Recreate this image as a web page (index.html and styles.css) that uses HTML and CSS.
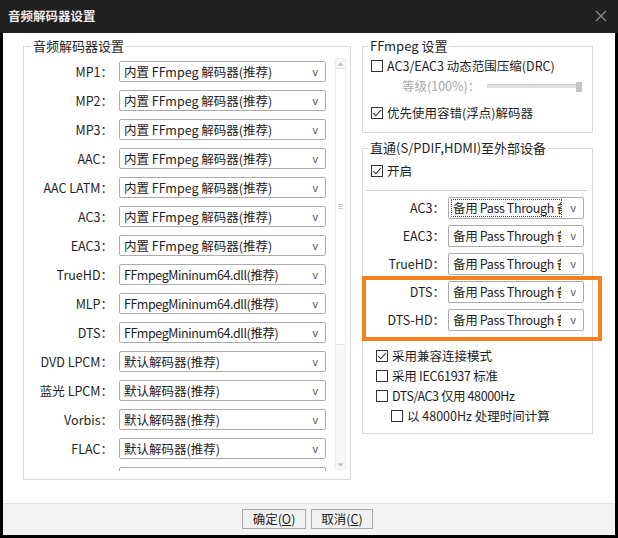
FILE: index.html
```html
<!DOCTYPE html>
<html lang="zh-CN">
<head>
<meta charset="utf-8">
<title>音频解码器设置</title>
<link rel="stylesheet" href="styles.css">
</head>
<body>
<div class="window">
  <div class="titlebar">
    <span class="title">音频解码器设置</span>
    <svg class="close" width="12" height="12" viewBox="0 0 12 12"><path d="M1 1L11 11M11 1L1 11" stroke="#8a8a8a" stroke-width="1.3" fill="none"/></svg>
  </div>
  <div class="body">
    <div class="main">
      <fieldset class="group left-group">
        <legend>音频解码器设置</legend>
        <div class="scroller">
          <div class="list">
            <div class="row"><span class="label">MP1：</span><div class="select"><span class="stext">内置 FFmpeg 解码器(推荐)</span><span class="arrow">v</span></div></div>
            <div class="row"><span class="label">MP2：</span><div class="select"><span class="stext">内置 FFmpeg 解码器(推荐)</span><span class="arrow">v</span></div></div>
            <div class="row"><span class="label">MP3：</span><div class="select"><span class="stext">内置 FFmpeg 解码器(推荐)</span><span class="arrow">v</span></div></div>
            <div class="row"><span class="label">AAC：</span><div class="select"><span class="stext">内置 FFmpeg 解码器(推荐)</span><span class="arrow">v</span></div></div>
            <div class="row"><span class="label">AAC LATM：</span><div class="select"><span class="stext">内置 FFmpeg 解码器(推荐)</span><span class="arrow">v</span></div></div>
            <div class="row"><span class="label">AC3：</span><div class="select"><span class="stext">内置 FFmpeg 解码器(推荐)</span><span class="arrow">v</span></div></div>
            <div class="row"><span class="label">EAC3：</span><div class="select"><span class="stext">内置 FFmpeg 解码器(推荐)</span><span class="arrow">v</span></div></div>
            <div class="row"><span class="label">TrueHD：</span><div class="select"><span class="stext tight">FFmpegMininum64.dll(推荐)</span><span class="arrow">v</span></div></div>
            <div class="row"><span class="label">MLP：</span><div class="select"><span class="stext tight">FFmpegMininum64.dll(推荐)</span><span class="arrow">v</span></div></div>
            <div class="row"><span class="label">DTS：</span><div class="select"><span class="stext tight">FFmpegMininum64.dll(推荐)</span><span class="arrow">v</span></div></div>
            <div class="row"><span class="label">DVD LPCM：</span><div class="select"><span class="stext">默认解码器(推荐)</span><span class="arrow">v</span></div></div>
            <div class="row"><span class="label">蓝光 LPCM：</span><div class="select"><span class="stext">默认解码器(推荐)</span><span class="arrow">v</span></div></div>
            <div class="row"><span class="label">Vorbis：</span><div class="select"><span class="stext">默认解码器(推荐)</span><span class="arrow">v</span></div></div>
            <div class="row"><span class="label">FLAC：</span><div class="select"><span class="stext">默认解码器(推荐)</span><span class="arrow">v</span></div></div>
            <div class="row"><span class="label"></span><div class="select"></div></div>
          </div>
          <div class="scrollbar">
            <div class="sb-btn"><svg width="9" height="6" viewBox="0 0 9 6"><path d="M1.5 4.5L4.5 1.5L7.5 4.5Z" fill="#b8b8b8"/></svg></div>
            <div class="sb-thumb"><span class="grip"></span></div>
            <div class="sb-track"></div>
            <div class="sb-btn"><svg width="9" height="6" viewBox="0 0 9 6"><path d="M1.5 1.5L4.5 4.5L7.5 1.5Z" fill="#b8b8b8"/></svg></div>
          </div>
        </div>
      </fieldset>
      <div class="right-col">
        <fieldset class="group ff-group">
          <legend>FFmpeg 设置</legend>
          <div class="check-row first">
            <span class="box"></span><span>AC3/EAC3 动态范围压缩(DRC)</span>
          </div>
          <div class="level-row">
            <span class="level-label">等级(100%)：</span>
            <div class="slider"><span class="slider-thumb"></span></div>
          </div>
          <div class="check-row third">
            <span class="box"><svg width="10" height="10" viewBox="0 0 10 10"><path d="M1.2 5.2L3.8 7.8L8.8 2.2" stroke="#333" stroke-width="1.1" fill="none"/></svg></span><span>优先使用容错(浮点)解码器</span>
          </div>
        </fieldset>
        <fieldset class="group pt-group">
          <legend>直通(S/PDIF,HDMI)至外部设备</legend>
          <div class="check-row enable">
            <span class="box"><svg width="10" height="10" viewBox="0 0 10 10"><path d="M1.2 5.2L3.8 7.8L8.8 2.2" stroke="#333" stroke-width="1.1" fill="none"/></svg></span><span>开启</span>
          </div>
          <div class="separator"></div>
          <div class="pt-rows">
            <div class="pt-row"><span class="pt-label">AC3：</span><div class="pselect"><span class="ptext focus">备用 Pass Through 备</span><span class="arrow">v</span></div></div>
            <div class="pt-row"><span class="pt-label">EAC3：</span><div class="pselect"><span class="ptext">备用 Pass Through 备</span><span class="arrow">v</span></div></div>
            <div class="pt-row"><span class="pt-label">TrueHD：</span><div class="pselect"><span class="ptext">备用 Pass Through 备</span><span class="arrow">v</span></div></div>
            <div class="pt-row"><span class="pt-label">DTS：</span><div class="pselect"><span class="ptext">备用 Pass Through 备</span><span class="arrow">v</span></div></div>
            <div class="pt-row"><span class="pt-label">DTS-HD：</span><div class="pselect"><span class="ptext">备用 Pass Through 备</span><span class="arrow">v</span></div></div>
          </div>
          <div class="opts">
            <div class="check-row opt"><span class="box"><svg width="10" height="10" viewBox="0 0 10 10"><path d="M1.2 5.2L3.8 7.8L8.8 2.2" stroke="#333" stroke-width="1.1" fill="none"/></svg></span><span>采用兼容连接模式</span></div>
            <div class="check-row opt"><span class="box"></span><span class="tight-s">采用 IEC61937 标准</span></div>
            <div class="check-row opt"><span class="box"></span><span class="tight">DTS/AC3 仅用 48000Hz</span></div>
            <div class="check-row opt indent"><span class="box"></span><span>以 48000Hz 处理时间计算</span></div>
          </div>
        </fieldset>
      </div>
    </div>
    <div class="footer">
      <button class="btn ok">确定(<u>O</u>)</button>
      <button class="btn cancel">取消(<u>C</u>)</button>
    </div>
  </div>
  <div class="highlight"></div>
</div>
</body>
</html>
```

FILE: styles.css
```css
* { box-sizing: border-box; }
html, body { margin: 0; padding: 0; }
body {
  background: #000;
  font-family: "Noto Sans CJK SC", "Noto Sans", sans-serif;
  font-size: 12.5px;
  color: #1e1e1e;
}
.window {
  position: relative;
  width: 618px;
  height: 538px;
  background: #000;
}
.titlebar {
  height: 33px;
  background: #202020;
  display: flex;
  align-items: center;
  justify-content: space-between;
  padding: 0 11px 0 8px;
}
.title {
  color: #ececec;
  font-size: 12.5px;
  font-weight: bold;
  line-height: 16px;
  margin-top: -1px;
}
.close { display: block; margin-top: -1px; }
.body {
  margin: 0 3px;
  height: 502px;
  background: #fff;
  display: flex;
  flex-direction: column;
}
.main {
  height: 470px;
  display: flex;
  padding: 4px 0 0 20px;
  gap: 11px;
}
.group {
  margin: 0;
  padding: 0;
  min-width: 0;
  border: 1px solid #d9d9d9;
}
.group legend {
  font-size: 13px;
  line-height: 18px;
  padding: 0 2px;
  color: #1e1e1e;
}
.left-group {
  width: 328px;
  height: 443px;
}
.left-group legend { margin-left: 7px; }
.scroller {
  display: flex;
  align-items: flex-start;
  padding-top: 2px;
}
.list {
  width: 302px;
  height: 414px;
  overflow: hidden;
}
.row {
  height: 29px;
  display: flex;
  align-items: center;
}
.label {
  width: 89px;
  text-align: right;
  white-space: nowrap;
  line-height: 16px;
}
.select {
  margin-left: 6px;
  width: 207px;
  height: 21px;
  border: 1px solid #ababab;
  border-radius: 2px;
  background: #fff;
  display: flex;
  align-items: center;
  justify-content: space-between;
  padding: 0 7px 0 4px;
}
.stext { white-space: nowrap; line-height: 16px; }
.tight { letter-spacing: -0.4px; }
.tight-s { letter-spacing: -0.25px; }
.arrow {
  font-family: "Liberation Sans", sans-serif;
  font-size: 11px;
  color: #555;
  line-height: 12px;
}
.scrollbar {
  margin-left: 9px;
  margin-top: 1px;
  width: 11px;
  height: 412px;
  background: #f7f7f7;
  border: 1px solid #ececec;
  display: flex;
  flex-direction: column;
}
.sb-btn {
  height: 9px;
  display: flex;
  align-items: center;
  justify-content: center;
}
.sb-thumb {
  height: 277px;
  background: #fff;
  border-top: 1px solid #e2e2e2;
  border-bottom: 1px solid #e2e2e2;
  display: flex;
  align-items: center;
  justify-content: center;
}
.grip {
  width: 5px;
  height: 5px;
  border-top: 1px solid #c8c8c8;
  border-bottom: 1px solid #c8c8c8;
}
.grip::after {
  content: "";
  display: block;
  margin-top: 1px;
  height: 1px;
  background: #c8c8c8;
}
.sb-track { flex: 1; }
.right-col {
  width: 231px;
  display: flex;
  flex-direction: column;
  gap: 6px;
}
.ff-group { height: 96px; }
.ff-group legend, .pt-group legend { margin-left: 5px; }
.pt-group { height: 295px; }
.check-row {
  display: flex;
  align-items: center;
  height: 20px;
  padding-left: 8px;
  white-space: nowrap;
  line-height: 16px;
}
.check-row.first { margin-top: 1px; }
.check-row.third { margin-top: 7px; }
.box {
  width: 12px;
  height: 12px;
  border: 1px solid #333;
  background: #fff;
  margin-right: 4px;
  display: flex;
  align-items: center;
  justify-content: center;
  flex: none;
}
.box svg { display: block; }
.level-row {
  height: 20px;
  display: flex;
  align-items: center;
  padding-left: 39px;
}
.level-label {
  color: #a8a8a8;
  width: 85px;
  line-height: 16px;
}
.slider {
  width: 95px;
  height: 4px;
  background: #dedede;
  border-top: 1px solid #cfcfcf;
  display: flex;
  justify-content: flex-end;
  align-items: center;
}
.slider-thumb {
  width: 6px;
  height: 10px;
  background: #c4c4c4;
}
.check-row.enable { margin-top: 4px; }
.separator {
  margin: 9px 5px 0 3px;
  height: 1px;
  background: #cfcfcf;
}
.pt-rows { margin-top: 3px; }
.pt-row {
  height: 28px;
  display: flex;
  align-items: center;
}
.pt-label {
  width: 82px;
  text-align: right;
  white-space: nowrap;
  line-height: 16px;
}
.pselect {
  margin-left: 3px;
  width: 136px;
  height: 22px;
  border: 1px solid #ababab;
  border-radius: 2px;
  background: #fff;
  display: flex;
  align-items: center;
  justify-content: space-between;
  padding: 0 7px 0 2px;
}
.ptext {
  width: 111px;
  height: 18px;
  line-height: 16px;
  overflow: hidden;
  white-space: nowrap;
  padding-left: 1px;
  letter-spacing: -0.35px;
  border: 1px dotted transparent;
}
.ptext.focus { border-color: #444; }
.opts { margin-top: 12px; }
.check-row.opt { padding-left: 13px; }
.check-row.indent { padding-left: 28px; }
.footer {
  height: 32px;
  background: #f3f3f3;
  border-top: 1px solid #e0e0e0;
  display: flex;
  align-items: flex-start;
  gap: 5px;
  padding: 5px 0 0 239px;
}
.btn {
  height: 20px;
  padding: 0;
  margin: 0;
  font-family: "Noto Sans CJK SC", "Noto Sans", sans-serif;
  font-size: 12.5px;
  line-height: 16px;
  color: #1e1e1e;
  background: #f1f1f1;
  border: 1px solid #a9a9a9;
  border-radius: 0;
}
.btn.ok { width: 64px; }
.btn.cancel { width: 62px; }
.btn u { text-underline-offset: 1px; }
.highlight {
  position: absolute;
  left: 362px;
  top: 276px;
  width: 240px;
  height: 65px;
  border: 4px solid #f58220;
  pointer-events: none;
}
```
